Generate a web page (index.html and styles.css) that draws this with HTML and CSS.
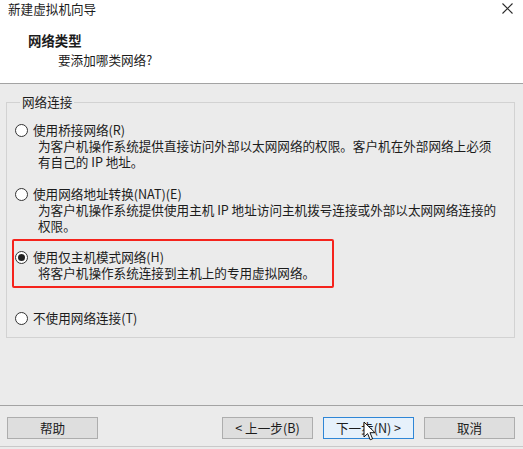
FILE: index.html
```html
<!DOCTYPE html>
<html lang="zh-CN">
<head>
<meta charset="utf-8">
<title>新建虚拟机向导</title>
<link rel="stylesheet" href="styles.css">
</head>
<body>
<div class="window">
  <div class="titlebar">
    <span class="title">新建虚拟机向导</span>
    <svg class="close" width="11" height="11" viewBox="0 0 11 11"><path d="M0.5 0.5 L10.5 10.5 M10.5 0.5 L0.5 10.5" stroke="#2a2a2a" stroke-width="1.1" fill="none"/></svg>
  </div>
  <div class="header">
    <div class="heading">网络类型</div>
    <div class="subheading">要添加哪类网络?</div>
  </div>
  <div class="content">
    <fieldset class="group">
      <legend>网络连接</legend>
      <div class="option">
        <div class="opt-label"><span class="radio"></span>使用桥接网络(R)</div>
        <div class="opt-desc">为客户机操作系统提供直接访问外部以太网网络的权限。客户机在外部网络上必须<br>有自己的 IP 地址。</div>
      </div>
      <div class="option">
        <div class="opt-label"><span class="radio"></span>使用网络地址转换(NAT)(E)</div>
        <div class="opt-desc">为客户机操作系统提供使用主机 IP 地址访问主机拨号连接或外部以太网网络连接的<br>权限。</div>
      </div>
      <div class="option option-marked">
        <div class="opt-label"><span class="radio checked"></span>使用仅主机模式网络(H)</div>
        <div class="opt-desc">将客户机操作系统连接到主机上的专用虚拟网络。</div>
        <span class="highlight"></span>
      </div>
      <div class="option option-last">
        <div class="opt-label"><span class="radio"></span>不使用网络连接(T)</div>
      </div>
    </fieldset>
  </div>
  <div class="footer">
    <button class="btn">帮助</button>
    <div class="spacer"></div>
    <button class="btn">&lt; 上一步(B)</button>
    <button class="btn btn-focus">下一步(N) &gt;
      <svg class="cursor" width="14" height="21" viewBox="0 0 14 21"><path d="M1 1 L1 16 L4.6 12.6 L7.2 18.8 L9.6 17.8 L7 11.7 L12 11.7 Z" fill="#fff" stroke="#111" stroke-width="1" stroke-linejoin="round"/></svg>
    </button>
    <button class="btn">取消</button>
  </div>
</div>
</body>
</html>
```
FILE: styles.css
```css
* { box-sizing: border-box; }
html, body { margin: 0; padding: 0; }
body {
  width: 523px;
  height: 449px;
  overflow: hidden;
  font-family: "Noto Sans CJK SC", "Noto Sans", sans-serif;
  font-size: 12.6px;
  line-height: 16px;
  color: #1c1c1c;
  background: #ebebeb;
}
.window {
  width: 523px;
  height: 449px;
  display: flex;
  flex-direction: column;
}
.titlebar {
  height: 18px;
  background: #fff;
  display: flex;
  align-items: center;
  justify-content: space-between;
  padding: 0 10px 0 8px;
}
.title { line-height: 18px; }
.close { display: block; margin-top: -2px; }
.header {
  height: 66px;
  background: #fff;
  border-bottom: 1px solid #a3a3a3;
  padding-top: 14px;
}
.heading {
  padding-left: 28px;
  font-weight: bold;
  font-size: 13.4px;
  line-height: 16px;
}
.subheading {
  padding-left: 58px;
  margin-top: 4px;
}
.content {
  flex: 1;
  padding: 10px 8px 0 6px;
}
.group {
  margin: 0;
  border: 1px solid #d2d2d2;
  padding: 12px 8px 11px 8px;
  min-width: 0;
}
.group legend {
  padding: 0 2px;
  margin-left: 5px;
  line-height: 16px;
}
.option { position: relative; }
.option + .option { margin-top: 16px; }
.option-marked { margin-top: 15px !important; }
.option-last { margin-top: 29px !important; }
.opt-label {
  display: flex;
  align-items: center;
  white-space: nowrap;
}
.opt-desc {
  padding-left: 23px;
  white-space: nowrap;
}
.radio {
  width: 13px;
  height: 13px;
  border: 1px solid #333;
  border-radius: 50%;
  background: #fff;
  margin-right: 5px;
  flex: none;
  position: relative;
}
.radio.checked::after {
  content: "";
  position: absolute;
  left: 2px;
  top: 2px;
  width: 7px;
  height: 7px;
  border-radius: 50%;
  background: #222;
}
.highlight {
  position: absolute;
  left: -3px;
  top: -10px;
  width: 322px;
  height: 49px;
  border: 2px solid #f5231c;
  border-radius: 2px;
  pointer-events: none;
}
.footer {
  height: 44px;
  border-top: 1px solid #a3a3a3;
  display: flex;
  align-items: flex-start;
  gap: 10px;
  padding: 11px 8px 0 7px;
  position: relative;
}
.footer::after {
  content: "";
  position: absolute;
  left: 0;
  right: 0;
  bottom: 2px;
  height: 1px;
  background: #c9c9c9;
}
.spacer { flex: 1; }
.btn {
  width: 91px;
  height: 22px;
  font-family: inherit;
  font-size: 12.6px;
  line-height: 16px;
  color: #1c1c1c;
  background: #dedede;
  border: 1px solid #adadad;
  padding: 0;
  margin: 0;
  position: relative;
}
.btn-focus {
  background: #e6f1fb;
  border-color: #2f86d6;
}
.cursor {
  position: absolute;
  left: 39px;
  top: 3px;
}
```
